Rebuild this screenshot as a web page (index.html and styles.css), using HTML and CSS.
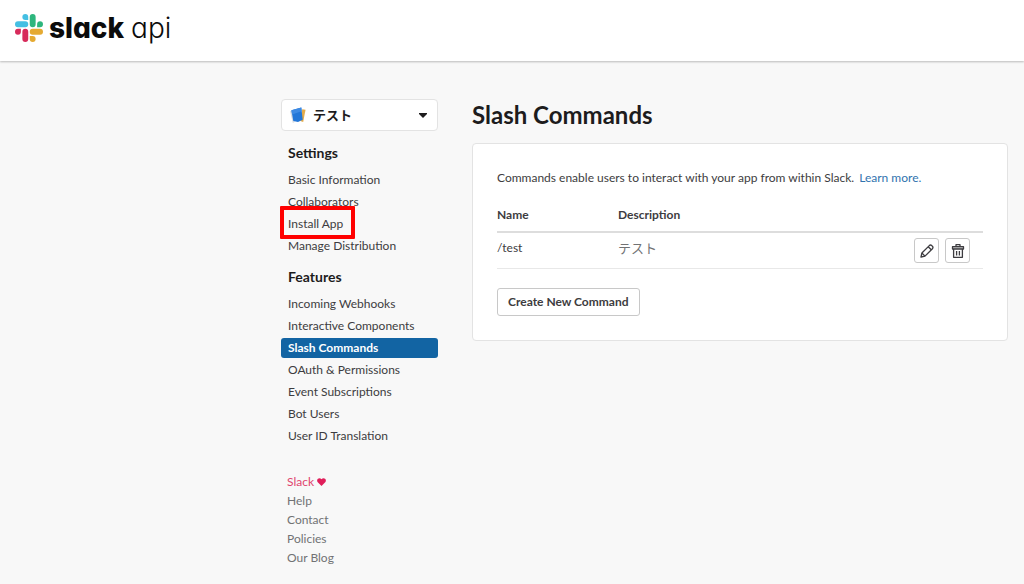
FILE: index.html
```html
<!DOCTYPE html>
<html lang="en">
<head>
<meta charset="utf-8">
<title>Slack API: Slash Commands</title>
<link rel="stylesheet" href="styles.css">
</head>
<body>
<header class="topbar">
  <a class="brand" href="#">
    <svg class="brand-mark" viewBox="0 0 24 24" aria-hidden="true">
      <path fill="#d72b5b" d="M5.042 15.165a2.528 2.528 0 0 1-2.52 2.523A2.528 2.528 0 0 1 0 15.165a2.527 2.527 0 0 1 2.522-2.52h2.52v2.52zM6.313 15.165a2.527 2.527 0 0 1 2.521-2.52 2.527 2.527 0 0 1 2.521 2.52v6.313A2.528 2.528 0 0 1 8.834 24a2.528 2.528 0 0 1-2.521-2.522v-6.313z"/>
      <path fill="#44bfe3" d="M8.834 5.042a2.528 2.528 0 0 1-2.521-2.52A2.528 2.528 0 0 1 8.834 0a2.528 2.528 0 0 1 2.521 2.522v2.520H8.834zM8.834 6.313a2.528 2.528 0 0 1 2.521 2.521 2.528 2.528 0 0 1-2.521 2.521H2.522A2.528 2.528 0 0 1 0 8.834a2.528 2.528 0 0 1 2.522-2.521h6.312z"/>
      <path fill="#2eb67d" d="M18.956 8.834a2.528 2.528 0 0 1 2.522-2.521A2.528 2.528 0 0 1 24 8.834a2.528 2.528 0 0 1-2.522 2.521h-2.522V8.834zM17.688 8.834a2.528 2.528 0 0 1-2.523 2.521 2.527 2.527 0 0 1-2.520-2.521V2.522A2.527 2.527 0 0 1 15.165 0a2.528 2.528 0 0 1 2.523 2.522v6.312z"/>
      <path fill="#e5aa32" d="M15.165 18.956a2.528 2.528 0 0 1 2.523 2.522A2.528 2.528 0 0 1 15.165 24a2.527 2.527 0 0 1-2.520-2.522v-2.522h2.520zM15.165 17.688a2.527 2.527 0 0 1-2.520-2.523 2.526 2.526 0 0 1 2.520-2.520h6.313A2.527 2.527 0 0 1 24 15.165a2.528 2.528 0 0 1-2.522 2.523h-6.313z"/>
    </svg>
    <span class="brand-name">slack</span>
    <span class="brand-sub">api</span>
  </a>
</header>
<div class="page">
  <aside class="sidebar">
    <button class="app-picker" type="button">
      <svg class="app-icon" viewBox="0 0 17 17" aria-hidden="true">
        <path fill="#d9dde2" d="M0 4.500l3-1 2 12.500-2 1z"/>
        <path fill="#e3ab4a" d="M13 2.500l3.500.5-2.500 13-3-1z"/>
        <path fill="#2377d8" d="M1.500 3.500L12 .5l1.500 13-5 2.500-5-1z"/>
        <path fill="#3d8ae3" d="M1.500 3.500L12 .5l.4 4L2.200 8z"/>
      </svg>
      <span class="app-name">テスト</span>
      <svg class="caret" viewBox="0 0 8 5" aria-hidden="true"><path fill="#1d1c1d" d="M0 0h8v1L4 5 0 1z"/></svg>
    </button>
    <nav class="menu">
      <h2 class="menu-title">Settings</h2>
      <ul class="menu-list">
        <li><a class="menu-link" href="#">Basic Information</a></li>
        <li><a class="menu-link" href="#">Collaborators</a></li>
        <li><a class="menu-link marked" href="#">Install App</a></li>
        <li><a class="menu-link" href="#">Manage Distribution</a></li>
      </ul>
      <h2 class="menu-title">Features</h2>
      <ul class="menu-list">
        <li><a class="menu-link" href="#">Incoming Webhooks</a></li>
        <li><a class="menu-link" href="#">Interactive Components</a></li>
        <li><a class="menu-link current" href="#" aria-current="page">Slash Commands</a></li>
        <li><a class="menu-link" href="#">OAuth &amp; Permissions</a></li>
        <li><a class="menu-link" href="#">Event Subscriptions</a></li>
        <li><a class="menu-link" href="#">Bot Users</a></li>
        <li><a class="menu-link" href="#">User ID Translation</a></li>
      </ul>
    </nav>
    <ul class="site-links">
      <li><a class="site-link love" href="#">Slack <svg class="heart" viewBox="0 0 10 9" aria-hidden="true"><path fill="#e01e5a" d="M5 9L.8 4.800C-.3 3.600-.1 1.700 1 .8 2.200-.2 4 0 5 1.400 6-.0 7.800-.2 9 .8c1.100.9 1.300 2.800.2 4z"/></svg></a></li>
      <li><a class="site-link" href="#">Help</a></li>
      <li><a class="site-link" href="#">Contact</a></li>
      <li><a class="site-link" href="#">Policies</a></li>
      <li><a class="site-link" href="#">Our Blog</a></li>
    </ul>
  </aside>
  <main class="content">
    <h1 class="title">Slash Commands</h1>
    <section class="card">
      <p class="intro">Commands enable users to interact with your app from within Slack. <a class="more" href="#">Learn more.</a></p>
      <table class="commands">
        <thead>
          <tr><th class="col-name" scope="col">Name</th><th scope="col">Description</th><td class="col-actions"></td></tr>
        </thead>
        <tbody>
          <tr>
            <td>/test</td>
            <td class="desc">テスト</td>
            <td>
              <div class="actions">
                <button class="icon-button" type="button" aria-label="Edit">
                  <svg class="icon" viewBox="0 0 14 14" aria-hidden="true"><g fill="none" stroke="#3d3c40" stroke-width="1.300" stroke-linejoin="round"><path d="M1 13l.9-4L9.300 1.600q1.200-1.100 2.400 0l.7.7q1.100 1.200 0 2.400L5 12.100z"/><path d="M8.200 2.700l3.100 3.100M1.900 9l3.100 3.100"/></g></svg>
                </button>
                <button class="icon-button" type="button" aria-label="Delete">
                  <svg class="icon" viewBox="0 0 14 14" aria-hidden="true"><path fill="#c4c4c4" d="M2 3h10v2H2z"/><g fill="none" stroke="#3d3c40" stroke-width="1.300" stroke-linejoin="round"><path d="M1.500 2.700h11v2.300h-11zM2.600 5v8.300h8.800V5M5 2.500V.7h4v1.800M5.600 7v4.500M8.400 7v4.500"/></g></svg>
                </button>
              </div>
            </td>
          </tr>
        </tbody>
      </table>
      <button class="create" type="button">Create New Command</button>
    </section>
  </main>
</div>
</body>
</html>
```
FILE: styles.css
```css
*, *::after { box-sizing: border-box; }

body {
  margin: 0;
  background: #f8f8f8;
  color: #3d3c40;
  font: 12px/20px Lato, "Noto Sans CJK JP", sans-serif;
}

a { color: inherit; text-decoration: none; }
ul { list-style: none; margin: 0; padding: 0; }
button { font: inherit; color: inherit; background: #fff; cursor: pointer; }

.topbar {
  display: flex;
  height: 61px;
  padding: 0 15px 5px;
  background: #fff;
  box-shadow: 0 1px 2px rgba(0, 0, 0, 0.25);
}
.brand { display: flex; align-items: center; color: #0b0b0b; font: 28px/36px Inter, sans-serif; font-feature-settings: "cv11"; }
.brand-mark { width: 28px; height: 28px; margin-right: 6px; }
.brand-name { font-weight: 800; margin-right: 7px; }
.brand-sub { font-weight: 300; }

.page {
  display: grid;
  grid-template-columns: 157px minmax(0, 1fr);
  column-gap: 34px;
  padding: 38px 16px 16px 281px;
}

.app-picker {
  display: flex;
  align-items: center;
  width: 100%;
  height: 32px;
  padding: 0 10px 0 8px;
  border: 1px solid #e3e3e3;
  border-radius: 4px;
}
.app-icon { width: 16px; height: 16px; margin-right: 7px; }
.app-name { flex: 1; text-align: left; font-size: 13px; font-weight: 700; color: #1d1c1d; }
.caret { width: 8px; height: 5px; }

.menu { padding-top: 12px; }
.menu-title { margin: 0 0 7px; padding-left: 7px; font-size: 14px; line-height: 20px; font-weight: 700; color: #1d1c1d; }
.menu-list { display: grid; gap: 2px; margin-bottom: 11px; }
.menu-link { display: block; position: relative; padding-left: 7px; border-radius: 3px; }
.current { background: #1264a3; color: #fff; font-weight: 700; }
.marked::after {
  content: "";
  position: absolute;
  left: -1px;
  top: -8px;
  width: 75px;
  height: 33px;
  border: 4px solid #f00;
  border-radius: 1px;
}

.site-links { padding: 15px 0 0 6px; }
.site-link { display: block; line-height: 19px; color: #717274; }
.love { color: #e0446f; }
.heart { width: 9px; height: 8px; }

.title { margin: 0 0 12px; font-size: 24px; line-height: 32px; font-weight: 700; color: #1d1c1d; }
.card { padding: 24px; background: #fff; border: 1px solid #e3e3e3; border-radius: 4px; }
.intro { margin: 0 0 17px; }
.more { color: #3173ae; margin-left: 2px; }

.commands { width: 100%; margin-bottom: 19px; border-collapse: collapse; table-layout: fixed; }
.commands th { padding: 0 0 6px; text-align: left; font-weight: 700; border-bottom: 2px solid #ddd; }
.commands thead td { border-bottom: 2px solid #ddd; }
.commands tbody td { padding: 5px 0; vertical-align: top; border-bottom: 1px solid #e8e8e8; }
.commands .desc { color: #717274; font-size: 13px; }
.col-name { width: 121px; }
.col-actions { width: 69px; }
.actions { display: flex; gap: 6px; }
.icon-button { display: grid; place-items: center; width: 25px; height: 25px; padding: 0; border: 1px solid #c8c8c8; border-radius: 3px; }
.icon { width: 14px; height: 14px; }
.create { height: 28px; padding: 0 10px; border: 1px solid #c8c8c8; border-radius: 3px; font-weight: 700; }
```
